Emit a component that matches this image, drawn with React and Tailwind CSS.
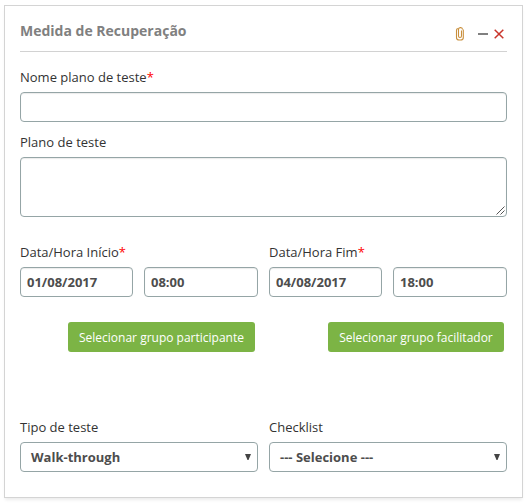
const field =
  "block h-[30px] w-full rounded-[4px] border border-[#95a5a6] bg-white px-1.5 text-[13px] font-bold text-[#4d4d4d] shadow-[inset_0_1px_1px_rgba(0,0,0,0.08)] outline-none";

function Label({ children, required }) {
  return (
    <label className="mb-1.5 block h-[18px] whitespace-nowrap text-[13px] leading-[18px] text-[#333]">
      {children}
      {required && <span className="text-[#f00]">*</span>}
    </label>
  );
}

function DateTime({ label, date, time }) {
  return (
    <div>
      <Label required>{label}</Label>
      <div className="flex gap-[11px]">
        <div className="w-[113px]">
          <input className={field} defaultValue={date} />
        </div>
        <div className="w-[114px]">
          <input className={field} defaultValue={time} />
        </div>
      </div>
    </div>
  );
}

function Select({ label, value }) {
  return (
    <div>
      <Label>{label}</Label>
      <div className="flex h-[30px] items-center justify-between rounded-[4px] border border-[#95a5a6] pl-2.5 pr-1.5 text-[13px] font-bold text-[#4d4d4d]">
        <span className="pt-0.5">{value}</span>
        <svg width="6" height="6" viewBox="0 0 6 6" className="-mt-px" fill="#444">
          <path d="M0 0h6L3.5 6h-1z" />
        </svg>
      </div>
    </div>
  );
}

const button =
  "h-[30px] rounded-[3px] bg-[#7cb445] pt-px text-center text-[12px] font-medium leading-[29px] text-white whitespace-nowrap";

export default function App() {
  return (
    <div className="h-[503px] w-[530px] bg-white pl-1 pt-[5px] font-['Open_Sans',sans-serif]">
      <section className="h-[493px] w-[519px] border border-[#d4d4d4] px-[15px] shadow-[0_3px_3px_-1px_rgba(0,0,0,0.08)]">
        <header className="flex h-[46px] justify-between border-b border-[#d2d2d2]">
          <h1 className="pt-[15px] text-sm font-bold leading-5 text-[#808080]">
            Medida de Recuperação
          </h1>
          <div className="mt-5 flex h-4 items-center pr-[3px]">
            <svg width="10" height="16" viewBox="0 0 10 16" fill="none" stroke="#c98f3c" strokeWidth="1.1">
              <path d="M6.5 4.5V10a1.5 1.5 0 0 1-3 0V3.4A1.8 1.8 0 0 1 5.2 1.6h.6A1.8 1.8 0 0 1 7.5 3.4" />
              <path d="M3.5 2.5C2 2.5 1.5 3.2 1.5 4.4v7A2.6 2.6 0 0 0 4.1 14h1.6a2.6 2.6 0 0 0 2.6-2.6V3.5" />
            </svg>
            <span className="ml-[13px] h-0.5 w-[10px] bg-[#808080]" />
            <svg className="ml-[6px]" width="10" height="10" viewBox="0 0 10 10" fill="none" stroke="#c9352b" strokeWidth="1.5">
              <path d="M.7.7l8.6 8.6M9.3.7L.7 9.3" />
            </svg>
          </div>
        </header>

        <div className="pt-4">
          <Label required>Nome plano de teste</Label>
          <input className={field} />
        </div>

        <div className="pt-[11px]">
          <Label>Plano de teste</Label>
          <div className="flex h-[60px] items-end justify-end rounded-[4px] border border-[#95a5a6] p-px shadow-[inset_0_1px_1px_rgba(0,0,0,0.08)]">
            <svg width="9" height="9" viewBox="0 0 9 9" stroke="#555" strokeWidth="1">
              <path d="M.5 8.5l8-8M4.5 8.5l4-4" />
            </svg>
          </div>
        </div>

        <div className="grid grid-cols-2 gap-[11px] pt-[26px]">
          <DateTime label="Data/Hora Início" date="01/08/2017" time="08:00" />
          <DateTime label="Data/Hora Fim" date="04/08/2017" time="18:00" />
        </div>

        <div className="flex justify-end gap-[73px] pr-[3px] pt-[25px]">
          <button className={`w-[187px] ${button}`}>Selecionar grupo participante</button>
          <button className={`w-[176px] ${button}`}>Selecionar grupo facilitador</button>
        </div>

        <div className="grid grid-cols-2 gap-[11px] pt-[66px]">
          <Select label="Tipo de teste" value="Walk-through" />
          <Select label="Checklist" value="--- Selecione ---" />
        </div>
      </section>
    </div>
  );
}
